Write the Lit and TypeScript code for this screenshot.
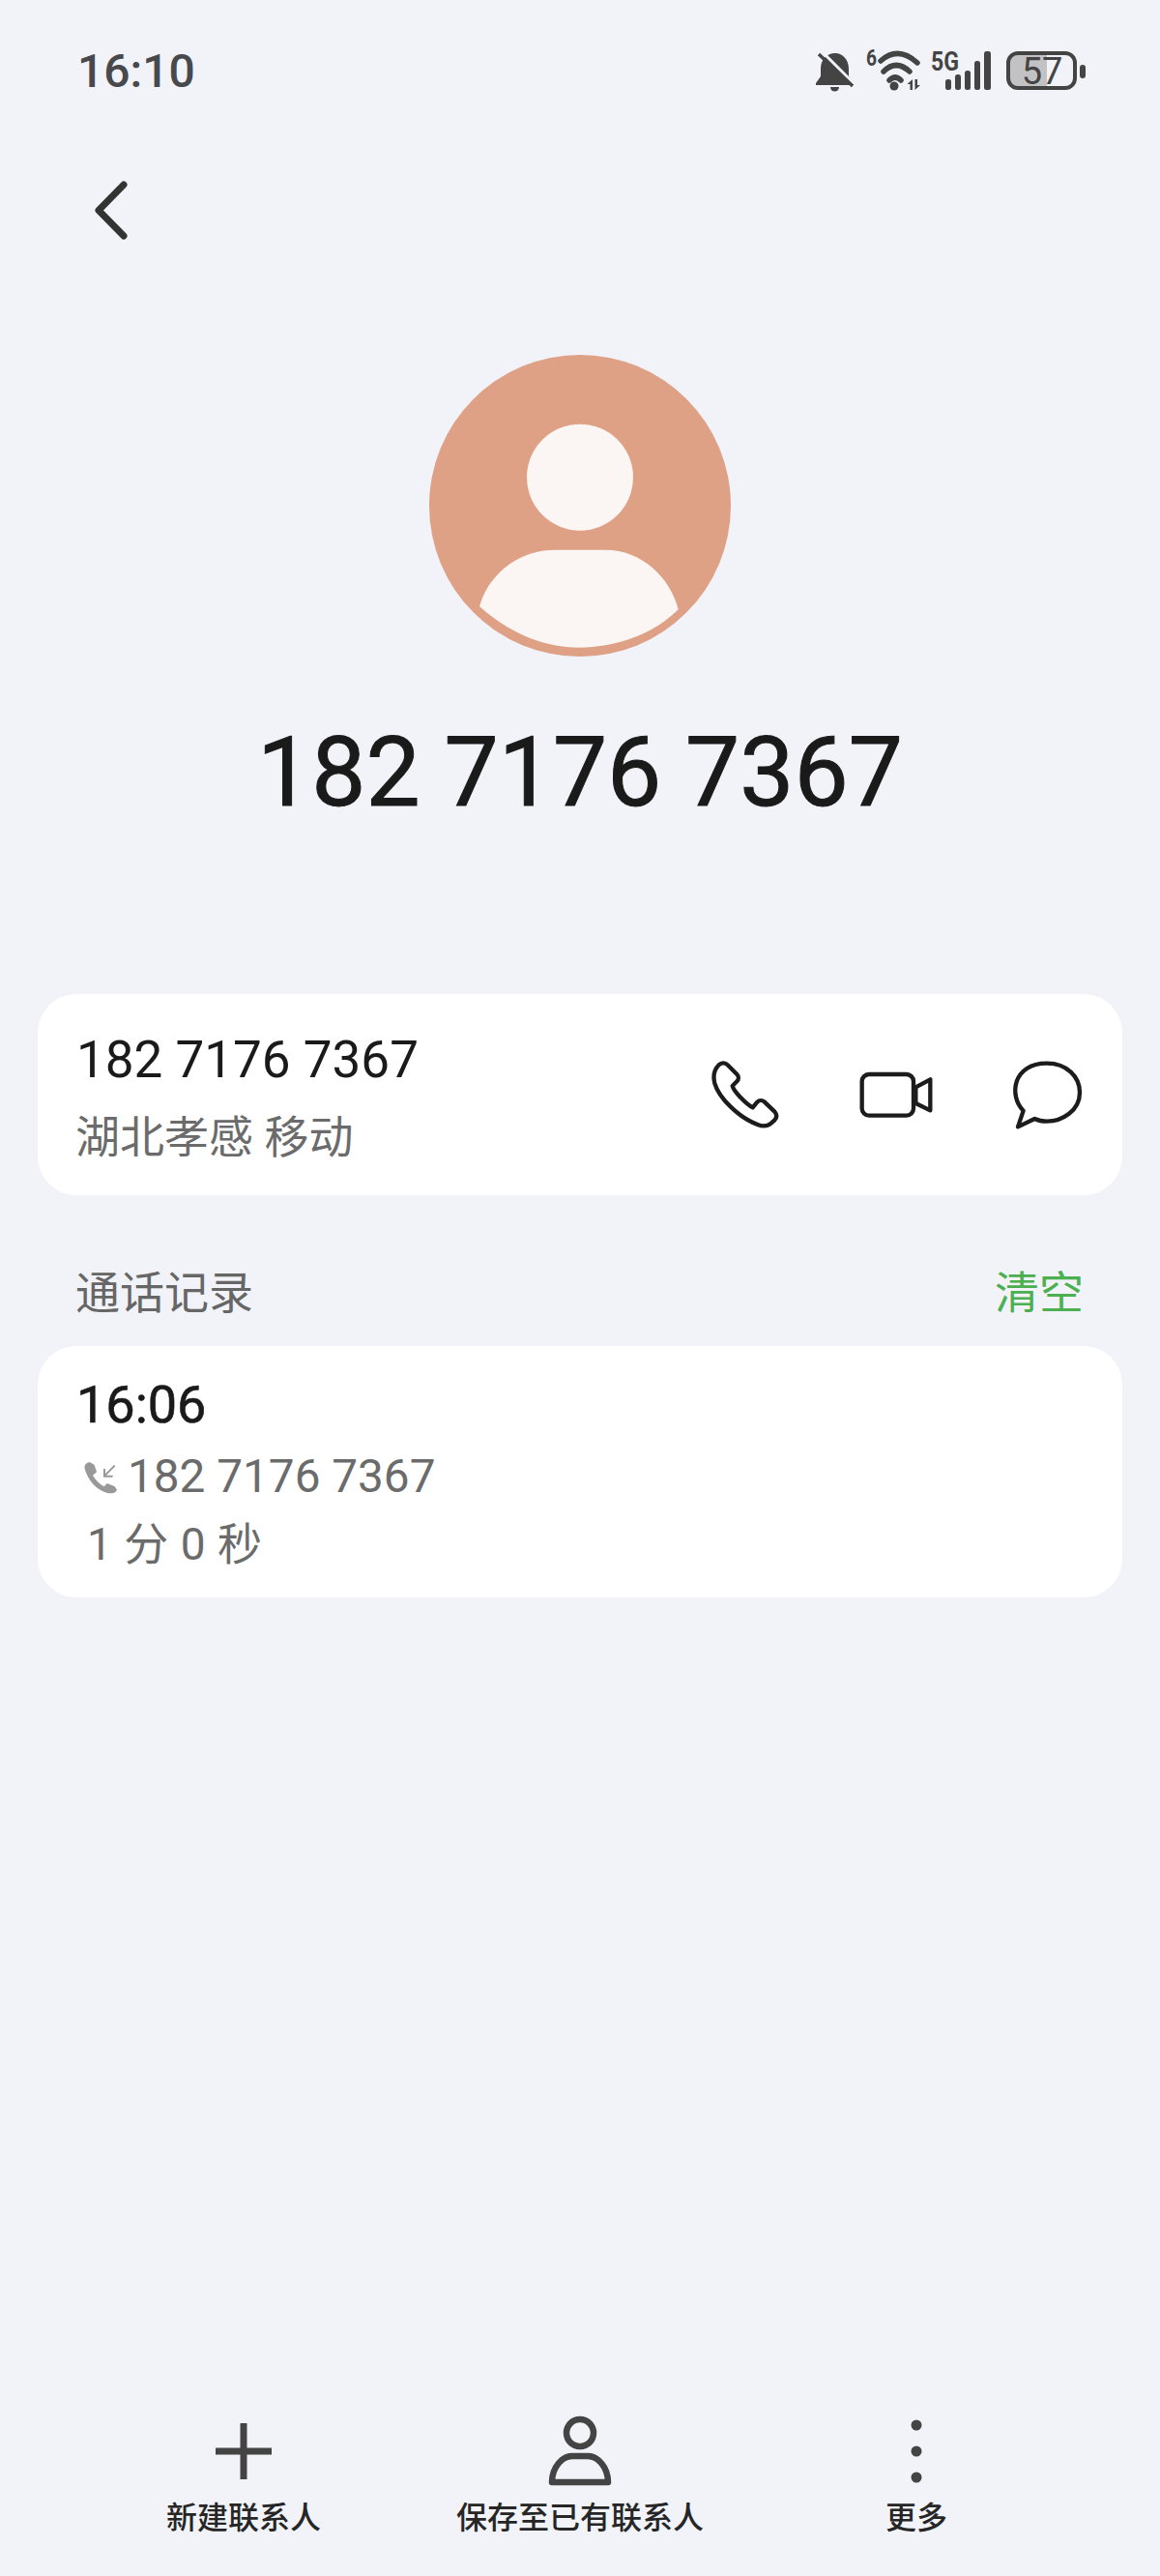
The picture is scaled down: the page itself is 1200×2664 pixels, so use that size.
import { LitElement, html, css } from "lit";
import { customElement } from "lit/decorators.js";

@customElement("app-root")
export class AppRoot extends LitElement {
  static styles = css`
    :host {
      display: block;
      width: 1200px;
      font-family: "Roboto", "Noto Sans CJK SC", sans-serif;
    }
    .page {
      width: 1200px;
      min-height: 2664px;
      background: #f1f3f8;
      display: flex;
      flex-direction: column;
      box-sizing: border-box;
    }
    svg { display: block; flex: none; }
    .status {
      height: 146px;
      display: flex;
      align-items: center;
      justify-content: space-between;
      padding: 0 60px 0 80px;
    }
    .status-icons { margin-bottom: 16px; }
    .clock {
      font-size: 48px;
      font-weight: 500;
      color: #48494c;
    }
    .nav {
      height: 142px;
      display: flex;
      align-items: center;
      padding-left: 90px;
    }
    .avatar {
      margin: 79px auto 0;
    }
    .title {
      margin-top: 61px;
      height: 118px;
      line-height: 118px;
      text-align: center;
      font-size: 100px;
      font-weight: 400;
      color: #1a1a1a;
      -webkit-text-stroke: 1px #1a1a1a;
    }
    .card {
      margin: 0 39px;
      background: #fff;
      border-radius: 40px;
    }
    .contact {
      margin-top: 170px;
      height: 208px;
      display: flex;
      align-items: center;
      justify-content: space-between;
      padding: 0 38px 0 40px;
      box-sizing: border-box;
    }
    .contact-text {
      display: flex;
      flex-direction: column;
      padding-top: 8px;
    }
    .number {
      font-size: 53px;
      line-height: 80px;
      color: #1a1a1a;
    }
    .region {
      font-size: 46px;
      line-height: 80px;
      color: #6b6b6b;
      margin-left: -1px;
    }
    .actions { display: flex; gap: 76px; }
    .section {
      margin-top: 69px;
      height: 56px;
      margin-bottom: 31px;
      padding: 0 79px 0 78px;
      display: flex;
      align-items: center;
      justify-content: space-between;
      font-size: 46px;
      color: #666;
    }
    .clear { color: #4caf50; }
    .log {
      height: 260px;
      padding: 24px 44px 0 40px;
      box-sizing: border-box;
    }
    .log-time {
      height: 74px;
      line-height: 74px;
      font-size: 54px;
      color: #1a1a1a;
      -webkit-text-stroke: 0.6px #1a1a1a;
    }
    .log-number {
      height: 74px;
      display: flex;
      align-items: center;
      gap: 9px;
      font-size: 47.700px;
      color: #6b6b6b;
      margin-left: 7px;
    }
    .log-duration {
      height: 64px;
      line-height: 64px;
      font-size: 46px;
      word-spacing: 1px;
      color: #6b6b6b;
      margin-left: 11px;
      padding-top: 1px;
    }
    .toolbar {
      margin-top: auto;
      display: grid;
      grid-template-columns: repeat(3, 348px);
      justify-content: center;
      padding-bottom: 37px;
    }
    .tool {
      display: flex;
      flex-direction: column;
      align-items: center;
    }
    .tool-icon {
      height: 78px;
      display: flex;
      align-items: center;
      justify-content: center;
      margin-bottom: 7px;
    }
    .tool-label {
      height: 46px;
      line-height: 46px;
      font-size: 32px;
      font-weight: 500;
      color: #262626;
    }
  `;

  render() {
    return html`
      <div class="page">
        <div class="status">
          <span class="clock">16:10</span>
          <svg class="status-icons" width="340" height="70" viewBox="0 0 340 70">
            <path d="M64 25c-9 0-15 7-15 16v8l-5 7v2h39v-2l-5-7v-8c0-9-6-16-14-16z" fill="#444"/>
            <path d="M59 60h9a4.500 4.500 0 0 1-9 0z" fill="#444"/>
            <path d="M50 23 86 59" stroke="#f1f3f8" stroke-width="3" fill="none"/>
            <path d="M47 26 82 59" stroke="#444" stroke-width="3.500" fill="none"/>
            <text x="96" y="38" font-size="23" font-weight="700" fill="#444" textLength="11" lengthAdjust="spacingAndGlyphs">6</text>
            <g fill="none" stroke="#444" stroke-width="5.500" stroke-linecap="round">
              <path d="M111 33Q129 17 149 35"/>
              <path d="M114 44Q127 31 141 44"/>
              <path d="M120 53Q126 47 132 53"/>
            </g>
            <circle cx="125" cy="59" r="4.500" fill="#444"/>
            <path d="M144 52v11h-2.500v-6h-3zM146.500 52h2.500v6h3l-5.500 5z" fill="#444"/>
            <text x="163" y="43" font-size="27" font-weight="700" fill="#444" textLength="29" lengthAdjust="spacingAndGlyphs">5G</text>
            <g fill="#444">
              <rect x="178" y="52" width="6" height="11" rx="2.500"/>
              <rect x="188" y="47" width="6" height="16" rx="2.500"/>
              <rect x="198" y="43" width="6" height="20" rx="2.500"/>
              <rect x="208" y="33" width="6" height="30" rx="2.500"/>
              <rect x="218" y="23" width="7" height="40" rx="2.500"/>
            </g>
            <path d="M254 25H283V61H254A10 10 0 0 1 244 51V35A10 10 0 0 1 254 25z" fill="#c2c2c4"/>
            <rect x="243" y="25" width="69" height="36" rx="10" fill="none" stroke="#444" stroke-width="4"/>
            <rect x="317" y="37" width="6" height="14" rx="3" fill="#444"/>
            <text x="278" y="57" font-size="38" text-anchor="middle" fill="#444">57</text>
          </svg>
        </div>

        <div class="nav">
          <svg width="50" height="70" viewBox="0 0 50 70">
            <path d="M38 9 12 35.500 38 62" fill="none" stroke="#333" stroke-width="7" stroke-linecap="round" stroke-linejoin="round"/>
          </svg>
        </div>

        <svg class="avatar" width="312" height="312" viewBox="132 80 936 936">
          <circle cx="600" cy="548" r="468" fill="#dfa186"/>
          <circle cx="600" cy="460" r="165" fill="#fbf6f3"/>
          <path d="M288 860C320 750 420 685 520 685H680C790 685 880 770 905 870C830 945 715 988 595 988C480 988 370 935 288 860Z" fill="#fbf6f3"/>
        </svg>

        <div class="title">182 7176 7367</div>

        <div class="card contact">
          <div class="contact-text">
            <span class="number">182 7176 7367</span>
            <span class="region">湖北孝感 移动</span>
          </div>
          <div class="actions">
            <svg width="80" height="80" viewBox="92 215 240 240" fill="none" stroke="#1c1c1c" stroke-width="13" stroke-linejoin="round">
              <path d="M130 243C138 235 150 236 157 243L186 272C192 278 192 288 186 294L172 308C176 325 215 365 235 375L249 358C255 352 265 352 271 357L303 388C310 396 310 406 303 414L292 424C280 434 265 434 250 428C190 405 130 345 117 300C112 280 115 258 130 243Z"/>
            </svg>
            <svg width="80" height="80" viewBox="564 215 240 240" fill="none" stroke="#1c1c1c" stroke-width="13" stroke-linejoin="round">
              <rect x="578" y="272" width="160" height="128" rx="22"/>
              <path d="M745 312 790 288V384L745 362Z"/>
            </svg>
            <svg width="80" height="80" viewBox="1028 215 240 240" fill="none" stroke="#1c1c1c" stroke-width="13" stroke-linejoin="round">
              <path d="M1075 385C1030 340 1040 238 1148 238C1210 238 1250 280 1250 328C1250 385 1195 418 1148 418C1135 418 1122 416 1110 410L1058 435Z"/>
            </svg>
          </div>
        </div>

        <div class="section">
          <span>通话记录</span>
          <span class="clear">清空</span>
        </div>

        <div class="card log">
          <div class="log-time">16:06</div>
          <div class="log-number">
            <svg width="37" height="37" viewBox="170 650 111 111">
              <path d="M175 680C172 668 182 658 192 660L205 668 212 690 200 700C208 715 222 728 235 735L245 725 268 735 275 745C272 755 258 758 245 755C210 745 185 715 175 680Z" fill="#999"/>
              <path d="M268 670 236 702M236 680V703H262" fill="none" stroke="#999" stroke-width="6"/>
            </svg>
            <span>182 7176 7367</span>
          </div>
          <div class="log-duration">1 分 0 秒</div>
        </div>

        <div class="toolbar">
          <div class="tool">
            <div class="tool-icon">
              <svg width="60" height="60" viewBox="0 0 60 60">
                <path d="M30 1V59M1 30H59" stroke="#444" stroke-width="7" fill="none"/>
              </svg>
            </div>
            <span class="tool-label">新建联系人</span>
          </div>
          <div class="tool">
            <div class="tool-icon">
              <svg width="72" height="78" viewBox="0 0 72 78">
                <g fill="none" stroke="#444" stroke-width="6.500" stroke-linejoin="round">
                  <circle cx="36" cy="20" r="14"/>
                  <path d="M7 71C7 55 18 44 28 44H44C54 44 65 55 65 71Z"/>
                </g>
              </svg>
            </div>
            <span class="tool-label">保存至已有联系人</span>
          </div>
          <div class="tool">
            <div class="tool-icon">
              <svg width="14" height="66" viewBox="0 0 14 66">
                <circle cx="7" cy="6" r="5.500" fill="#444"/>
                <circle cx="7" cy="33" r="5.500" fill="#444"/>
                <circle cx="7" cy="60" r="5.500" fill="#444"/>
              </svg>
            </div>
            <span class="tool-label">更多</span>
          </div>
        </div>
      </div>
    `;
  }
}
